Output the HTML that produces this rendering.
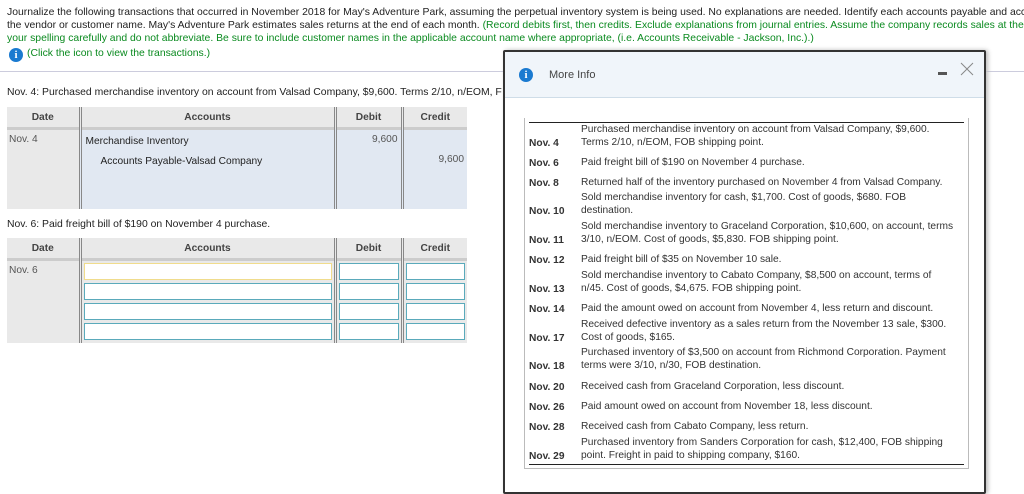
<!DOCTYPE html><html><head><style>
body{margin:0;width:1024px;height:471px;overflow:hidden;background:#fff;font-family:"Liberation Sans",Arial,sans-serif;font-size:10.4px;color:#222;position:relative}
.a{position:absolute;white-space:nowrap}
.g{color:#0a8a1f}
table{border-collapse:collapse;position:absolute;left:7px;font-size:10.2px;table-layout:fixed}
td,th{padding:0}
th{background:#e9e9e9;color:#444;font-weight:bold;height:20px;border-bottom:3px solid #ccc}
.vr{border-left:3px double #888}
.inp{display:block;height:15px;border:1px solid #5aaabb;background:#fff;margin:2px 2px 3px}
.modal{position:absolute;left:503px;top:50px;width:479px;height:440px;border:2px solid #333;border-radius:2px;background:#fff;box-shadow:2px 0 4px #bbb}
.mh{height:45px;background:#f0f5fa;border-bottom:1px solid #cfdde8;position:relative}
.ib{position:absolute;left:19px;top:66px;width:443px;height:350px;border:1px solid #bbb;border-top:none}
.row{position:absolute;left:4px;font-size:10.2px;color:#333}
.row b{position:absolute;left:0;bottom:0;color:#333;white-space:nowrap}
.row span{position:absolute;left:52px;bottom:0;line-height:12.5px;white-space:nowrap}
</style></head><body>
<div class="a" style="left:7px;top:6px;line-height:13px">Journalize the following transactions that occurred in November 2018 for May's Adventure Park, assuming the perpetual inventory system is being used. No explanations are needed. Identify each accounts payable and acc<br>the vendor or customer name. May's Adventure Park estimates sales returns at the end of each month. <span class="g">(Record debits first, then credits. Exclude explanations from journal entries. Assume the company records sales at the</span><br><span class="g">your spelling carefully and do not abbreviate. Be sure to include customer names in the applicable account name where appropriate, (i.e. Accounts Receivable - Jackson, Inc.).)</span></div>
<div class="a" style="left:9px;top:48px;width:14px;height:14px;border-radius:50%;background:#1a7ad0;color:#fff;font-weight:bold;font-size:11px;text-align:center;line-height:14px;font-family:'Liberation Serif',serif">i</div>
<div class="a g" style="left:27px;top:48px">(Click the icon to view the transactions.)</div>
<div class="a" style="left:0;top:71px;width:1024px;height:1px;background:#ccd"></div>
<div class="a" style="left:7px;top:87px">Nov. 4: Purchased merchandise inventory on account from Valsad Company, $9,600. Terms 2/10, n/EOM, F</div>
<table style="top:107px;width:460px">
<colgroup><col style="width:73px"><col style="width:255px"><col style="width:67px"><col style="width:65px"></colgroup>
<tr><th>Date</th><th class="vr">Accounts</th><th class="vr">Debit</th><th class="vr">Credit</th></tr>
<tr style="background:#e1e8f2;vertical-align:top;height:80px"><td style="background:#e9e9e9;padding:4px 2px;color:#555">Nov. 4</td><td class="vr" style="padding:2px 4px;line-height:20px">Merchandise Inventory<br><span style="padding-left:15px">Accounts Payable-Valsad Company</span></td><td class="vr" style="text-align:right;padding:4px 3px;color:#555">9,600</td><td class="vr" style="text-align:right;padding:24px 3px 0;color:#555">9,600</td></tr>
</table>
<div class="a" style="left:7px;top:219px">Nov. 6: Paid freight bill of $190 on November 4 purchase.</div>
<table style="top:238px;width:460px">
<colgroup><col style="width:73px"><col style="width:255px"><col style="width:67px"><col style="width:65px"></colgroup>
<tr><th>Date</th><th class="vr">Accounts</th><th class="vr">Debit</th><th class="vr">Credit</th></tr>
<tr style="background:#e9e9e9;vertical-align:top"><td style="padding:4px 2px;color:#555">Nov. 6</td><td class="vr"><i class="inp" style="border-color:#f0dc8c"></i><i class="inp"></i><i class="inp"></i><i class="inp"></i></td><td class="vr"><i class="inp"></i><i class="inp"></i><i class="inp"></i><i class="inp"></i></td><td class="vr"><i class="inp"></i><i class="inp"></i><i class="inp"></i><i class="inp"></i></td></tr>
</table>
<div class="modal"><div class="mh">
<div class="a" style="left:14px;top:16px;width:14px;height:14px;border-radius:50%;background:#1a7ad0;color:#fff;font-weight:bold;font-size:11px;text-align:center;line-height:14px;font-family:'Liberation Serif',serif">i</div>
<div class="a" style="left:44px;top:17px;font-size:11px;color:#444">More Info</div>
<div class="a" style="left:433px;top:20px;width:9px;height:3px;background:#555"></div>
<svg class="a" style="left:455px;top:10px" width="14" height="14"><path d="M1 1L13 13M13 1L1 13" stroke="#888" stroke-width="1"/></svg>
</div>
<div class="ib"><div class="a" style="left:4px;top:4px;width:435px;height:1px;background:#222"></div>
<div class="a" style="left:4px;bottom:3px;width:435px;height:1px;background:#222"></div>
<div class="row" style="top:31px"><b>Nov. 4</b><span>Purchased merchandise inventory on account from Valsad Company, $9,600.<br>Terms 2/10, n/EOM, FOB shipping point.</span></div>
<div class="row" style="top:51px"><b>Nov. 6</b><span>Paid freight bill of $190 on November 4 purchase.</span></div>
<div class="row" style="top:71px"><b>Nov. 8</b><span>Returned half of the inventory purchased on November 4 from Valsad Company.</span></div>
<div class="row" style="top:99px"><b>Nov. 10</b><span>Sold merchandise inventory for cash, $1,700. Cost of goods, $680. FOB<br>destination.</span></div>
<div class="row" style="top:128px"><b>Nov. 11</b><span>Sold merchandise inventory to Graceland Corporation, $10,600, on account, terms<br>3/10, n/EOM. Cost of goods, $5,830. FOB shipping point.</span></div>
<div class="row" style="top:148px"><b>Nov. 12</b><span>Paid freight bill of $35 on November 10 sale.</span></div>
<div class="row" style="top:177px"><b>Nov. 13</b><span>Sold merchandise inventory to Cabato Company, $8,500 on account, terms of<br>n/45. Cost of goods, $4,675. FOB shipping point.</span></div>
<div class="row" style="top:197px"><b>Nov. 14</b><span>Paid the amount owed on account from November 4, less return and discount.</span></div>
<div class="row" style="top:226px"><b>Nov. 17</b><span>Received defective inventory as a sales return from the November 13 sale, $300.<br>Cost of goods, $165.</span></div>
<div class="row" style="top:254px"><b>Nov. 18</b><span>Purchased inventory of $3,500 on account from Richmond Corporation. Payment<br>terms were 3/10, n/30, FOB destination.</span></div>
<div class="row" style="top:275px"><b>Nov. 20</b><span>Received cash from Graceland Corporation, less discount.</span></div>
<div class="row" style="top:295px"><b>Nov. 26</b><span>Paid amount owed on account from November 18, less discount.</span></div>
<div class="row" style="top:315px"><b>Nov. 28</b><span>Received cash from Cabato Company, less return.</span></div>
<div class="row" style="top:344px"><b>Nov. 29</b><span>Purchased inventory from Sanders Corporation for cash, $12,400, FOB shipping<br>point. Freight in paid to shipping company, $160.</span></div>
</div></div>
</body></html>
